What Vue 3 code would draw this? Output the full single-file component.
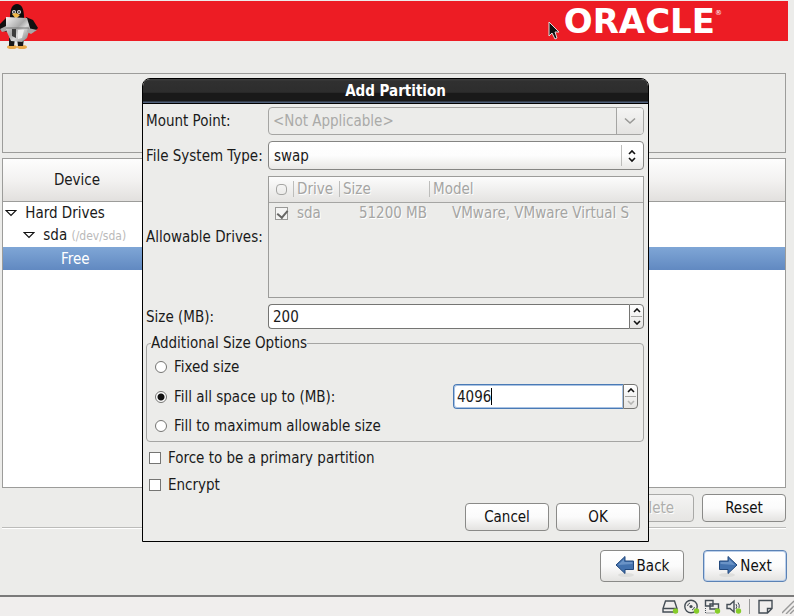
<template>
  <div class="installer">
    <!-- banner -->
    <header class="banner">
      <svg class="tux" viewBox="0 0 38 46" aria-hidden="true">
        <ellipse cx="12" cy="43" rx="5" ry="2" fill="#e9a94a" />
        <ellipse cx="22" cy="43" rx="5" ry="2" fill="#e9a94a" />
        <path d="M9 34 L15 34 L14 42 L9 42Z M17 34 L24 34 L23 42 L18 42Z" fill="#181818" />
        <path d="M6 14 L0 20 L0 26 L7 28Z" fill="#111" />
        <path d="M26 13 L33 16 L38 24 L34 28 L27 25Z" fill="#111" />
        <path d="M10 14 Q10 0 17 0 Q24 0 24 14Z" fill="#0d0d0d" />
        <circle cx="14" cy="8" r="2" fill="#ddd" />
        <circle cx="19" cy="8" r="2" fill="#ddd" />
        <circle cx="14" cy="8" r="1" fill="#333" />
        <circle cx="19" cy="8" r="1" fill="#333" />
        <path d="M12 10 L16 9 L20 11 L16 15Z" fill="#efb649" />
        <path d="M6 13 L27 14 L30 24 L27 34 L22 38 L11 37 L6 26Z" fill="url(#steel)" />
        <path d="M0 25 L6 22 L6 27 L2 28Z M28 24 L37 26 L31 30 L27 28Z" fill="#a8a8a8" />
        <path d="M6 24 L29 24" stroke="#777" stroke-width="1" />
        <path d="M12 25 h4 v9 l-4 -2Z" fill="#3d3d3d" />
        <path d="M18 26 L24 26 L22 34 L18 35Z" fill="#eee" />
        <defs>
          <linearGradient id="steel" x1="0" x2="1" y1="0" y2="1">
            <stop offset="0" stop-color="#f4f4f4" />
            <stop offset="0.45" stop-color="#a9a9a9" />
            <stop offset="0.6" stop-color="#d8d8d8" />
            <stop offset="1" stop-color="#777" />
          </linearGradient>
        </defs>
      </svg>
      <div class="brand">ORACLE<sup>®</sup></div>
      <svg class="pointer" viewBox="0 0 12 19" aria-hidden="true">
        <path d="M1 1 V15 L4 12 L7 18 L9 17 L7 11 H11Z" fill="#111" stroke="#ddd" stroke-width="1" />
      </svg>
    </header>

    <!-- main screen -->
    <main class="screen">
      <section class="drive-graph"></section>

      <section class="device-list">
        <table class="tree">
          <thead>
            <tr><th class="device-col">Device</th><th></th></tr>
          </thead>
          <tbody>
            <tr
              v-for="row in devices"
              :key="row.name"
              :class="{ selected: row.name === selectedDevice }"
              @click="selectedDevice = row.name"
            >
              <td colspan="2" :class="'level-' + row.level">
                <svg v-if="row.open" class="expander" viewBox="0 0 12 8" aria-hidden="true">
                  <path d="M1 1.5 H11 L6 6.5Z" fill="#fff" stroke="#111" stroke-width="1.2" />
                </svg>
                {{ row.name }} <small v-if="row.path">({{ row.path }})</small>
              </td>
            </tr>
          </tbody>
        </table>
      </section>

      <div class="list-actions">
        <button class="btn" disabled>Delete</button>
        <button class="btn">Reset</button>
      </div>
      <hr class="divider" />
      <nav class="nav-actions">
        <button class="btn nav-btn">
          <svg class="arrow" viewBox="0 0 20 22" aria-hidden="true">
            <ellipse cx="11" cy="20" rx="8" ry="2" fill="#dededc" />
            <path d="M1 10 L10 1.5 V6 H18.5 V14.5 H10 V18.5Z" fill="#4372ae" stroke="#23497d" />
            <path d="M3 10 L9 4 V7 H17.5 V9Z" fill="#6a93c6" />
          </svg>
          Back
        </button>
        <button class="btn nav-btn default">
          <svg class="arrow" viewBox="0 0 20 22" aria-hidden="true">
            <ellipse cx="9" cy="20" rx="8" ry="2" fill="#dededc" />
            <path d="M19 10 L10 1.5 V6 H1.5 V14.5 H10 V18.5Z" fill="#4372ae" stroke="#23497d" />
            <path d="M17 10 L11 4 V7 H2.5 V9Z" fill="#6a93c6" />
          </svg>
          Next
        </button>
      </nav>
    </main>

    <!-- vm status bar -->
    <footer class="status-bar">
      <svg viewBox="0 0 17 15" aria-hidden="true">
        <path d="M3.5 2 H12.5 L15 9.5 V13 H1 V9.5Z M1 9.5 H15" class="line" />
        <circle cx="13.5" cy="12" r="2.7" class="dot" />
      </svg>
      <svg viewBox="0 0 17 15" aria-hidden="true">
        <circle cx="8" cy="7.5" r="6.2" class="line" />
        <circle cx="8" cy="7.5" r="1.6" fill="#444d55" />
        <path d="M4.5 7 A4 4 0 0 1 7 4 M9 11 A4 4 0 0 0 11.5 8" class="line thin" />
        <circle cx="13.5" cy="12" r="2.7" class="dot" />
      </svg>
      <svg viewBox="0 0 17 15" aria-hidden="true">
        <path d="M1.5 1.5 H9 V7 H1.5Z M6 5 H14.5 V10 H6Z" class="line" />
        <path d="M1.5 9 V14 H11" class="line thin" stroke-dasharray="1 1" />
        <circle cx="13.5" cy="12" r="2.7" class="dot" />
      </svg>
      <svg viewBox="0 0 17 15" aria-hidden="true">
        <path d="M2 5.5 H5 L9 2 V13 L5 9.5 H2Z" class="line" />
        <path d="M11 5 Q12.5 7.5 11 10 M13 3.5 Q15 6 14 9" class="line thin" />
        <circle cx="13.5" cy="12" r="2.7" class="dot" />
      </svg>
      <span class="status-sep"></span>
      <svg viewBox="0 0 17 15" aria-hidden="true">
        <path d="M2 1.5 H15 V9.5 L10.5 14 H2Z M15 9.5 H10.5 V14" class="line" />
      </svg>
      <svg class="grip" viewBox="0 0 12 15" aria-hidden="true">
        <path d="M0 14 L12 2 M4 15 L12 7 M8 15 L12 11" stroke="#999" stroke-width="1.4" />
      </svg>
    </footer>

    <!-- Add Partition dialog -->
    <div class="overlay">
      <form class="dialog" role="dialog" aria-labelledby="dialog-title" @submit.prevent>
        <h1 id="dialog-title" class="title">Add Partition</h1>
        <div class="body">
          <div class="form-grid">
            <label for="mount">Mount Point:</label>
            <div class="combo entry">
              <select id="mount" disabled>
                <option>&lt;Not Applicable&gt;</option>
              </select>
              <span class="drop">
                <svg viewBox="0 0 12 8"><path d="M1 1.5 L6 6 L11 1.5" /></svg>
              </span>
            </div>

            <label for="fstype">File System Type:</label>
            <div class="combo">
              <select id="fstype" v-model="fsType">
                <option v-for="t in fsTypes" :key="t">{{ t }}</option>
              </select>
              <span class="updown">
                <svg viewBox="0 0 10 14"><path d="M2 5 L5 2 L8 5 M2 9 L5 12 L8 9" /></svg>
              </span>
            </div>

            <span>Allowable Drives:</span>
            <div class="drives">
              <table>
                <thead>
                  <tr>
                    <th class="c-check"><i class="ring"></i></th>
                    <th class="c-drive"><span>Drive</span></th>
                    <th class="c-size"><span>Size</span></th>
                    <th><span>Model</span></th>
                  </tr>
                </thead>
                <tbody>
                  <tr>
                    <td class="c-check">
                      <input type="checkbox" checked disabled aria-label="sda" />
                    </td>
                    <td>sda</td>
                    <td class="num">51200 MB</td>
                    <td class="model">VMware, VMware Virtual S</td>
                  </tr>
                </tbody>
              </table>
            </div>

            <label for="size">Size (MB):</label>
            <div class="spin">
              <div class="spin-field">
                <input id="size" v-model.number="size" type="text" />
              </div>
              <div class="steppers">
                <button type="button" aria-label="Increase" @click="size++">
                  <svg viewBox="0 0 8 5"><path d="M1 4 L4 1 L7 4" /></svg>
                </button>
                <button type="button" aria-label="Decrease" @click="size--">
                  <svg viewBox="0 0 8 5"><path d="M1 1 L4 4 L7 1" /></svg>
                </button>
              </div>
            </div>
          </div>

          <fieldset>
            <legend>Additional Size Options</legend>
            <label class="choice">
              <input v-model="sizeMode" type="radio" value="fixed" />Fixed size
            </label>
            <div class="fill-row">
              <label class="choice">
                <input v-model="sizeMode" type="radio" value="upto" />Fill all space up to (MB):
              </label>
              <div class="spin focused">
                <div class="spin-field">
                  <input v-model="maxSize" type="text" aria-label="Maximum size" :style="{ width: fieldWidth }" />
                  <span class="caret"></span>
                </div>
                <div class="steppers">
                  <button type="button" aria-label="Increase">
                    <svg viewBox="0 0 8 5"><path d="M1 4 L4 1 L7 4" /></svg>
                  </button>
                  <button type="button" aria-label="Decrease" disabled>
                    <svg viewBox="0 0 8 5"><path d="M1 1 L4 4 L7 1" /></svg>
                  </button>
                </div>
              </div>
            </div>
            <label class="choice">
              <input v-model="sizeMode" type="radio" value="max" />Fill to maximum allowable size
            </label>
          </fieldset>

          <div class="flags">
            <label class="choice"><input v-model="primary" type="checkbox" />Force to be a primary partition</label>
            <label class="choice"><input v-model="encrypt" type="checkbox" />Encrypt</label>
          </div>

          <div class="dialog-actions">
            <button type="button" class="btn">Cancel</button>
            <button type="submit" class="btn">OK</button>
          </div>
        </div>
      </form>
    </div>
  </div>
</template>

<script setup>
import { ref, computed } from "vue";

const devices = [
  { name: "Hard Drives", level: 0, open: true },
  { name: "sda", path: "/dev/sda", level: 1, open: true },
  { name: "Free", level: 2 },
];
const selectedDevice = ref("Free");

const fsTypes = ["swap"];
const fsType = ref("swap");
const size = ref(200);
const sizeMode = ref("upto");
const maxSize = ref("4096");
const primary = ref(false);
const encrypt = ref(false);

// the caret follows the last digit
const fieldWidth = computed(() => `${maxSize.value.length}ch`);
</script>

<style>
body {
  background: #ececea;
}
</style>

<style scoped>
.installer {
  position: relative;
  display: flex;
  flex-direction: column;
  min-height: 100vh;
  box-sizing: border-box;
  padding-top: 1px;
  color: #1a1a1a;
  font: 15px/16px "DejaVu Sans Condensed", "DejaVu Sans", sans-serif;
}

.installer * {
  box-sizing: border-box;
}

button,
input,
select {
  font: inherit;
  color: inherit;
  margin: 0;
}

/* banner */
.banner {
  position: relative;
  display: flex;
  justify-content: space-between;
  align-items: center;
  height: 40px;
  margin-right: 6px;
  padding-right: 66px;
  background: #ed1c24;
}

.tux {
  width: 38px;
  height: 46px;
  align-self: flex-start;
  margin-top: 3px;
}

.brand {
  display: flex;
  color: #fff;
  font-family: "DejaVu Sans", sans-serif;
  font-size: 34px;
  font-weight: bold;
  line-height: 40px;
}

.brand sup {
  font-size: 7px;
  line-height: 24px;
  font-weight: normal;
}

.pointer {
  position: absolute;
  right: 228px;
  top: 20px;
  width: 12px;
  height: 19px;
}

/* main screen */
.screen {
  flex: 1;
  display: flex;
  flex-direction: column;
  padding: 32px 8px 13px 2px;
}

.drive-graph {
  height: 80px;
  margin-bottom: 5px;
  border: 1px solid #9c9c9a;
}

.device-list {
  flex: 1;
  border: 1px solid #9c9c9a;
  background: #fff;
}

.tree {
  width: 100%;
  border-collapse: collapse;
}

.tree thead tr {
  height: 42px;
  background: linear-gradient(#fdfdfd, #f3f2f1 50%, #e2e0de);
}

.tree th {
  padding: 0;
  font-weight: normal;
  border-bottom: 1px solid #9c9c9a;
}

.device-col {
  width: 148px;
}

.tree td {
  height: 23px;
  padding: 0 2px;
}

.tree td.level-1 {
  padding-left: 20px;
}

.tree td.level-2 {
  padding-left: 58px;
}

.tree small {
  font-size: 12px;
  color: #b9b9b9;
}

.tree .selected {
  color: #fff;
  background: linear-gradient(#7fa6d6, #6189c1);
}

.expander {
  width: 12px;
  height: 8px;
  margin-right: 4px;
  vertical-align: 1px;
}

.list-actions {
  display: flex;
  justify-content: flex-end;
  gap: 8px;
  margin-top: 6px;
}

.divider {
  width: 100%;
  margin: 5px 0 21px;
  border: 0;
  border-top: 1px solid #bcbcba;
  border-bottom: 1px solid #fff;
}

.nav-actions {
  display: flex;
  justify-content: flex-end;
  gap: 19px;
  margin-right: -1px;
}

.btn {
  width: 84px;
  height: 28px;
  padding: 0;
  border: 1px solid #8a8a88;
  border-radius: 4px;
  background: linear-gradient(#fff, #fbfbfb 50%, #e4e3e1);
  color: #111;
}

.btn:disabled {
  color: #aeaeac;
  border-color: #a9a9a7;
  background: linear-gradient(#f4f4f3, #e6e5e3);
  text-shadow: 1px 1px #fff;
}

.nav-btn {
  display: flex;
  justify-content: center;
  align-items: center;
  gap: 2px;
  height: 32px;
}

.nav-btn.default {
  border-color: #5b82b5;
  box-shadow: inset 0 0 0 1px #bcd0ea;
}

.arrow {
  width: 20px;
  height: 22px;
}

/* status bar */
.status-bar {
  display: flex;
  justify-content: flex-end;
  align-items: center;
  gap: 4px;
  height: 21px;
  border-top: 2px solid #7a7a7a;
  background: #f0eeed;
}

.status-bar svg {
  width: 17px;
  height: 15px;
}

.status-bar .grip {
  width: 12px;
  margin-left: 4px;
}

.line {
  fill: none;
  stroke: #444d55;
  stroke-width: 1.4;
}

.thin {
  stroke-width: 1;
}

.dot {
  fill: #86cc2a;
}

.status-sep {
  width: 1px;
  height: 15px;
  margin: 0 3px;
  background: #999;
}

/* dialog */
.overlay {
  position: absolute;
  top: 78px;
  left: 0;
  right: 3px;
  display: flex;
  justify-content: center;
}

.dialog {
  width: 507px;
  border: 1px solid #000;
  border-radius: 8px 8px 0 0;
  background: #ececea;
  overflow: hidden;
}

.title {
  margin: 0;
  border-bottom: 1px solid #000;
  background: linear-gradient(#444 0, #303030 2px, #2d2d2d 55%, #191919 60%, #191919 22px, #50607a 23px);
  color: #fff;
  font-size: 15px;
  line-height: 24px;
  text-align: center;
}

.body {
  padding: 3px 4px 10px 3px;
}

.form-grid {
  display: grid;
  grid-template-columns: 122px 1fr;
  align-items: center;
  row-gap: 6px;
}

.combo {
  position: relative;
  height: 29px;
}

.combo.entry {
  height: 28px;
}

.combo select {
  display: block;
  appearance: none;
  width: 100%;
  height: 100%;
  padding: 0 5px;
  border: 1px solid #858583;
  border-radius: 4px;
  background: linear-gradient(#fff, #fdfdfd 50%, #e9e8e6);
}

.combo select:disabled {
  padding: 0 4px;
  border-color: #a5a5a3;
  background: #ececea;
  color: #aaaaa8;
  opacity: 1;
}

.drop,
.updown {
  position: absolute;
  right: 1px;
  display: flex;
  align-items: center;
  justify-content: center;
  pointer-events: none;
}

.drop {
  top: 1px;
  bottom: 1px;
  width: 27px;
  border-left: 1px solid #a5a5a3;
  border-radius: 0 3px 3px 0;
  background: linear-gradient(#f4f4f3, #e4e3e1);
}

.updown {
  top: 4px;
  bottom: 4px;
  right: 3px;
  width: 20px;
  border-left: 1px solid #bdbdbb;
}

.drop svg {
  width: 12px;
  height: 8px;
}

.updown svg {
  width: 10px;
  height: 14px;
}

.drop path,
.updown path,
.steppers path {
  fill: none;
  stroke: #111;
  stroke-width: 1.6;
}

.drop path {
  stroke: #999997;
}

.drives {
  height: 122px;
  border: 1px solid #9c9c9a;
  color: #a5a5a3;
  text-shadow: 1px 1px #fff;
}

.drives table {
  width: 100%;
  table-layout: fixed;
  border-collapse: collapse;
}

.drives thead tr {
  height: 25px;
  background: linear-gradient(#fcfcfc, #e4e3e1);
}

.drives th {
  padding: 0;
  border-bottom: 1px solid #a5a5a3;
  font-weight: normal;
  text-align: left;
}

.drives th span {
  display: block;
  padding-left: 3px;
  border-left: 1px solid #bdbdbb;
}

.c-check {
  width: 24px;
}

.c-drive {
  width: 46px;
}

.c-size {
  width: 90px;
}

.drives td {
  height: 22px;
  padding: 0 4px;
  white-space: nowrap;
}

.drives td.c-check,
.drives .num {
  padding: 0;
}

.drives .num {
  padding-right: 2px;
  text-align: right;
}

.drives .model {
  padding-left: 23px;
}

.ring {
  display: block;
  width: 11px;
  height: 11px;
  margin-left: 7px;
  border: 1px solid #a5a5a3;
  border-radius: 4px;
}

/* spin buttons */
.spin {
  display: flex;
  height: 25px;
}

.spin-field {
  flex: 1;
  display: flex;
  align-items: center;
  padding: 0 4px;
  border: 1px solid #757573;
  border-right: 0;
  border-radius: 4px 0 0 4px;
  background: #fff;
}

.spin-field input {
  width: 100%;
  padding: 0;
  border: 0;
  outline: 0;
  background: none;
}

.focused {
  width: 185px;
}

.focused .spin-field {
  padding: 0 3px;
  border-color: #4a7ab5;
  box-shadow: inset 0 0 0 1px #a9c3e4;
}

.focused input {
  caret-color: transparent;
}

.caret {
  flex: none;
  width: 1px;
  height: 17px;
  background: #000;
}

.steppers {
  display: flex;
  flex-direction: column;
  width: 15px;
  border: 1px solid #757573;
  border-radius: 0 4px 4px 0;
  background: linear-gradient(#fff, #e6e5e3);
}

.steppers button {
  flex: 1;
  display: flex;
  align-items: center;
  justify-content: center;
  margin: 0 1px;
  padding: 0;
  border: 0;
  background: none;
}

.steppers button + button {
  border-top: 1px solid #a5a5a3;
}

.steppers svg {
  width: 8px;
  height: 5px;
}

.steppers button:disabled path {
  stroke: #b5b5b3;
}

/* options */
fieldset {
  min-width: 0;
  margin: 6px 0;
  padding: 6px 5px 5px 8px;
  border: 1px solid #a5a5a3;
  border-radius: 4px;
}

legend {
  margin-left: -4px;
  padding: 0;
}

.choice {
  display: flex;
  align-items: center;
  gap: 7px;
  height: 20px;
}

.fill-row {
  display: flex;
  justify-content: space-between;
  align-items: center;
  margin: 7px 0;
}

.choice input,
.drives input {
  appearance: none;
  flex: none;
  display: block;
  width: 12px;
  height: 12px;
  border: 1px solid #757573;
  background: #fff;
}

.choice input[type="radio"] {
  border-radius: 50%;
}

.choice input[type="radio"]:checked {
  background: radial-gradient(circle, #111 0 3px, #fff 4px);
}

.drives input {
  width: 13px;
  height: 13px;
  margin-left: 6px;
  border-color: #999997;
  background: #f4f4f3;
}

.drives input:checked::after,
.choice input[type="checkbox"]:checked::after {
  content: "";
  display: block;
  width: 5px;
  height: 8px;
  margin: 0 0 0 3px;
  border: solid #666664;
  border-width: 0 2px 2px 0;
  transform: rotate(40deg);
}

.flags {
  display: flex;
  flex-direction: column;
  gap: 7px;
  padding-left: 3px;
}

.dialog-actions {
  display: flex;
  justify-content: flex-end;
  gap: 7px;
  margin-top: 8px;
  padding-right: 4px;
}
</style>
